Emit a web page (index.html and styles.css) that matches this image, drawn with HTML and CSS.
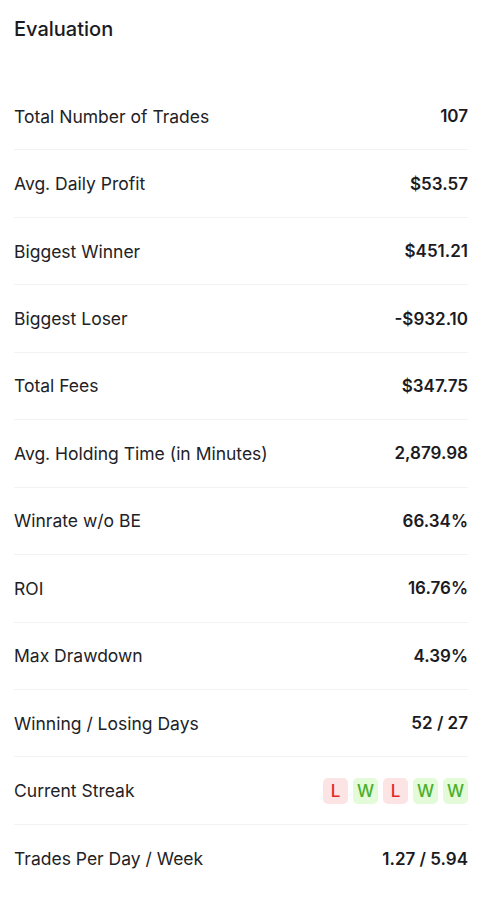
FILE: index.html
```html
<!DOCTYPE html>
<html lang="en">
<head>
    <meta charset="UTF-8">
    <meta name="viewport" content="width=device-width, initial-scale=1.0">
    <title>Evaluation</title>
    <link rel="stylesheet" href="styles.css">
</head>
<body>
    <div class="card">
        <h1 class="card-title">Evaluation</h1>
        <div class="stats">
            <div class="stat-row"><span class="label">Total Number of Trades</span><span class="value">107</span></div>
            <div class="stat-row"><span class="label">Avg. Daily Profit</span><span class="value">$53.57</span></div>
            <div class="stat-row"><span class="label">Biggest Winner</span><span class="value">$451.21</span></div>
            <div class="stat-row"><span class="label">Biggest Loser</span><span class="value">-$932.10</span></div>
            <div class="stat-row"><span class="label">Total Fees</span><span class="value">$347.75</span></div>
            <div class="stat-row"><span class="label">Avg. Holding Time (in Minutes)</span><span class="value">2,879.98</span></div>
            <div class="stat-row"><span class="label">Winrate w/o BE</span><span class="value">66.34%</span></div>
            <div class="stat-row"><span class="label">ROI</span><span class="value">16.76%</span></div>
            <div class="stat-row"><span class="label">Max Drawdown</span><span class="value">4.39%</span></div>
            <div class="stat-row"><span class="label">Winning / Losing Days</span><span class="value">52 / 27</span></div>
            <div class="stat-row">
                <span class="label">Current Streak</span>
                <span class="streak">
                    <span class="badge loss">L</span>
                    <span class="badge win">W</span>
                    <span class="badge loss">L</span>
                    <span class="badge win">W</span>
                    <span class="badge win">W</span>
                </span>
            </div>
            <div class="stat-row"><span class="label">Trades Per Day / Week</span><span class="value">1.27 / 5.94</span></div>
        </div>
    </div>
</body>
</html>
```

FILE: styles.css
```css
body {
    font-family: Inter, "Noto Sans", sans-serif;
    margin: 0;
    padding: 0;
    background: #ffffff;
    color: #1b1b1f;
}
.card {
    padding: 16px 17px 0 14px;
}
.card-title {
    font-size: 20px;
    font-weight: 500;
    margin: 0;
    line-height: 27px;
    height: 67px;
}
.stat-row {
    display: flex;
    justify-content: space-between;
    align-items: center;
    height: 67.45px;
    box-sizing: border-box;
    border-bottom: 1px solid #f1f2f6;
    font-size: 17.5px;
}
.stat-row:last-child {
    border-bottom: none;
}
.label {
    font-weight: 400;
    color: #222226;
}
.value {
    font-weight: 600;
    font-size: 17px;
}
.streak {
    display: flex;
    gap: 5px;
}
.badge {
    width: 25px;
    height: 26px;
    border-radius: 5px;
    display: flex;
    align-items: center;
    justify-content: center;
    font-size: 17px;
    font-weight: 500;
}
.loss {
    background: #fde4e4;
    color: #e5262a;
}
.win {
    background: #e3fbd9;
    color: #4caf2c;
}
```
